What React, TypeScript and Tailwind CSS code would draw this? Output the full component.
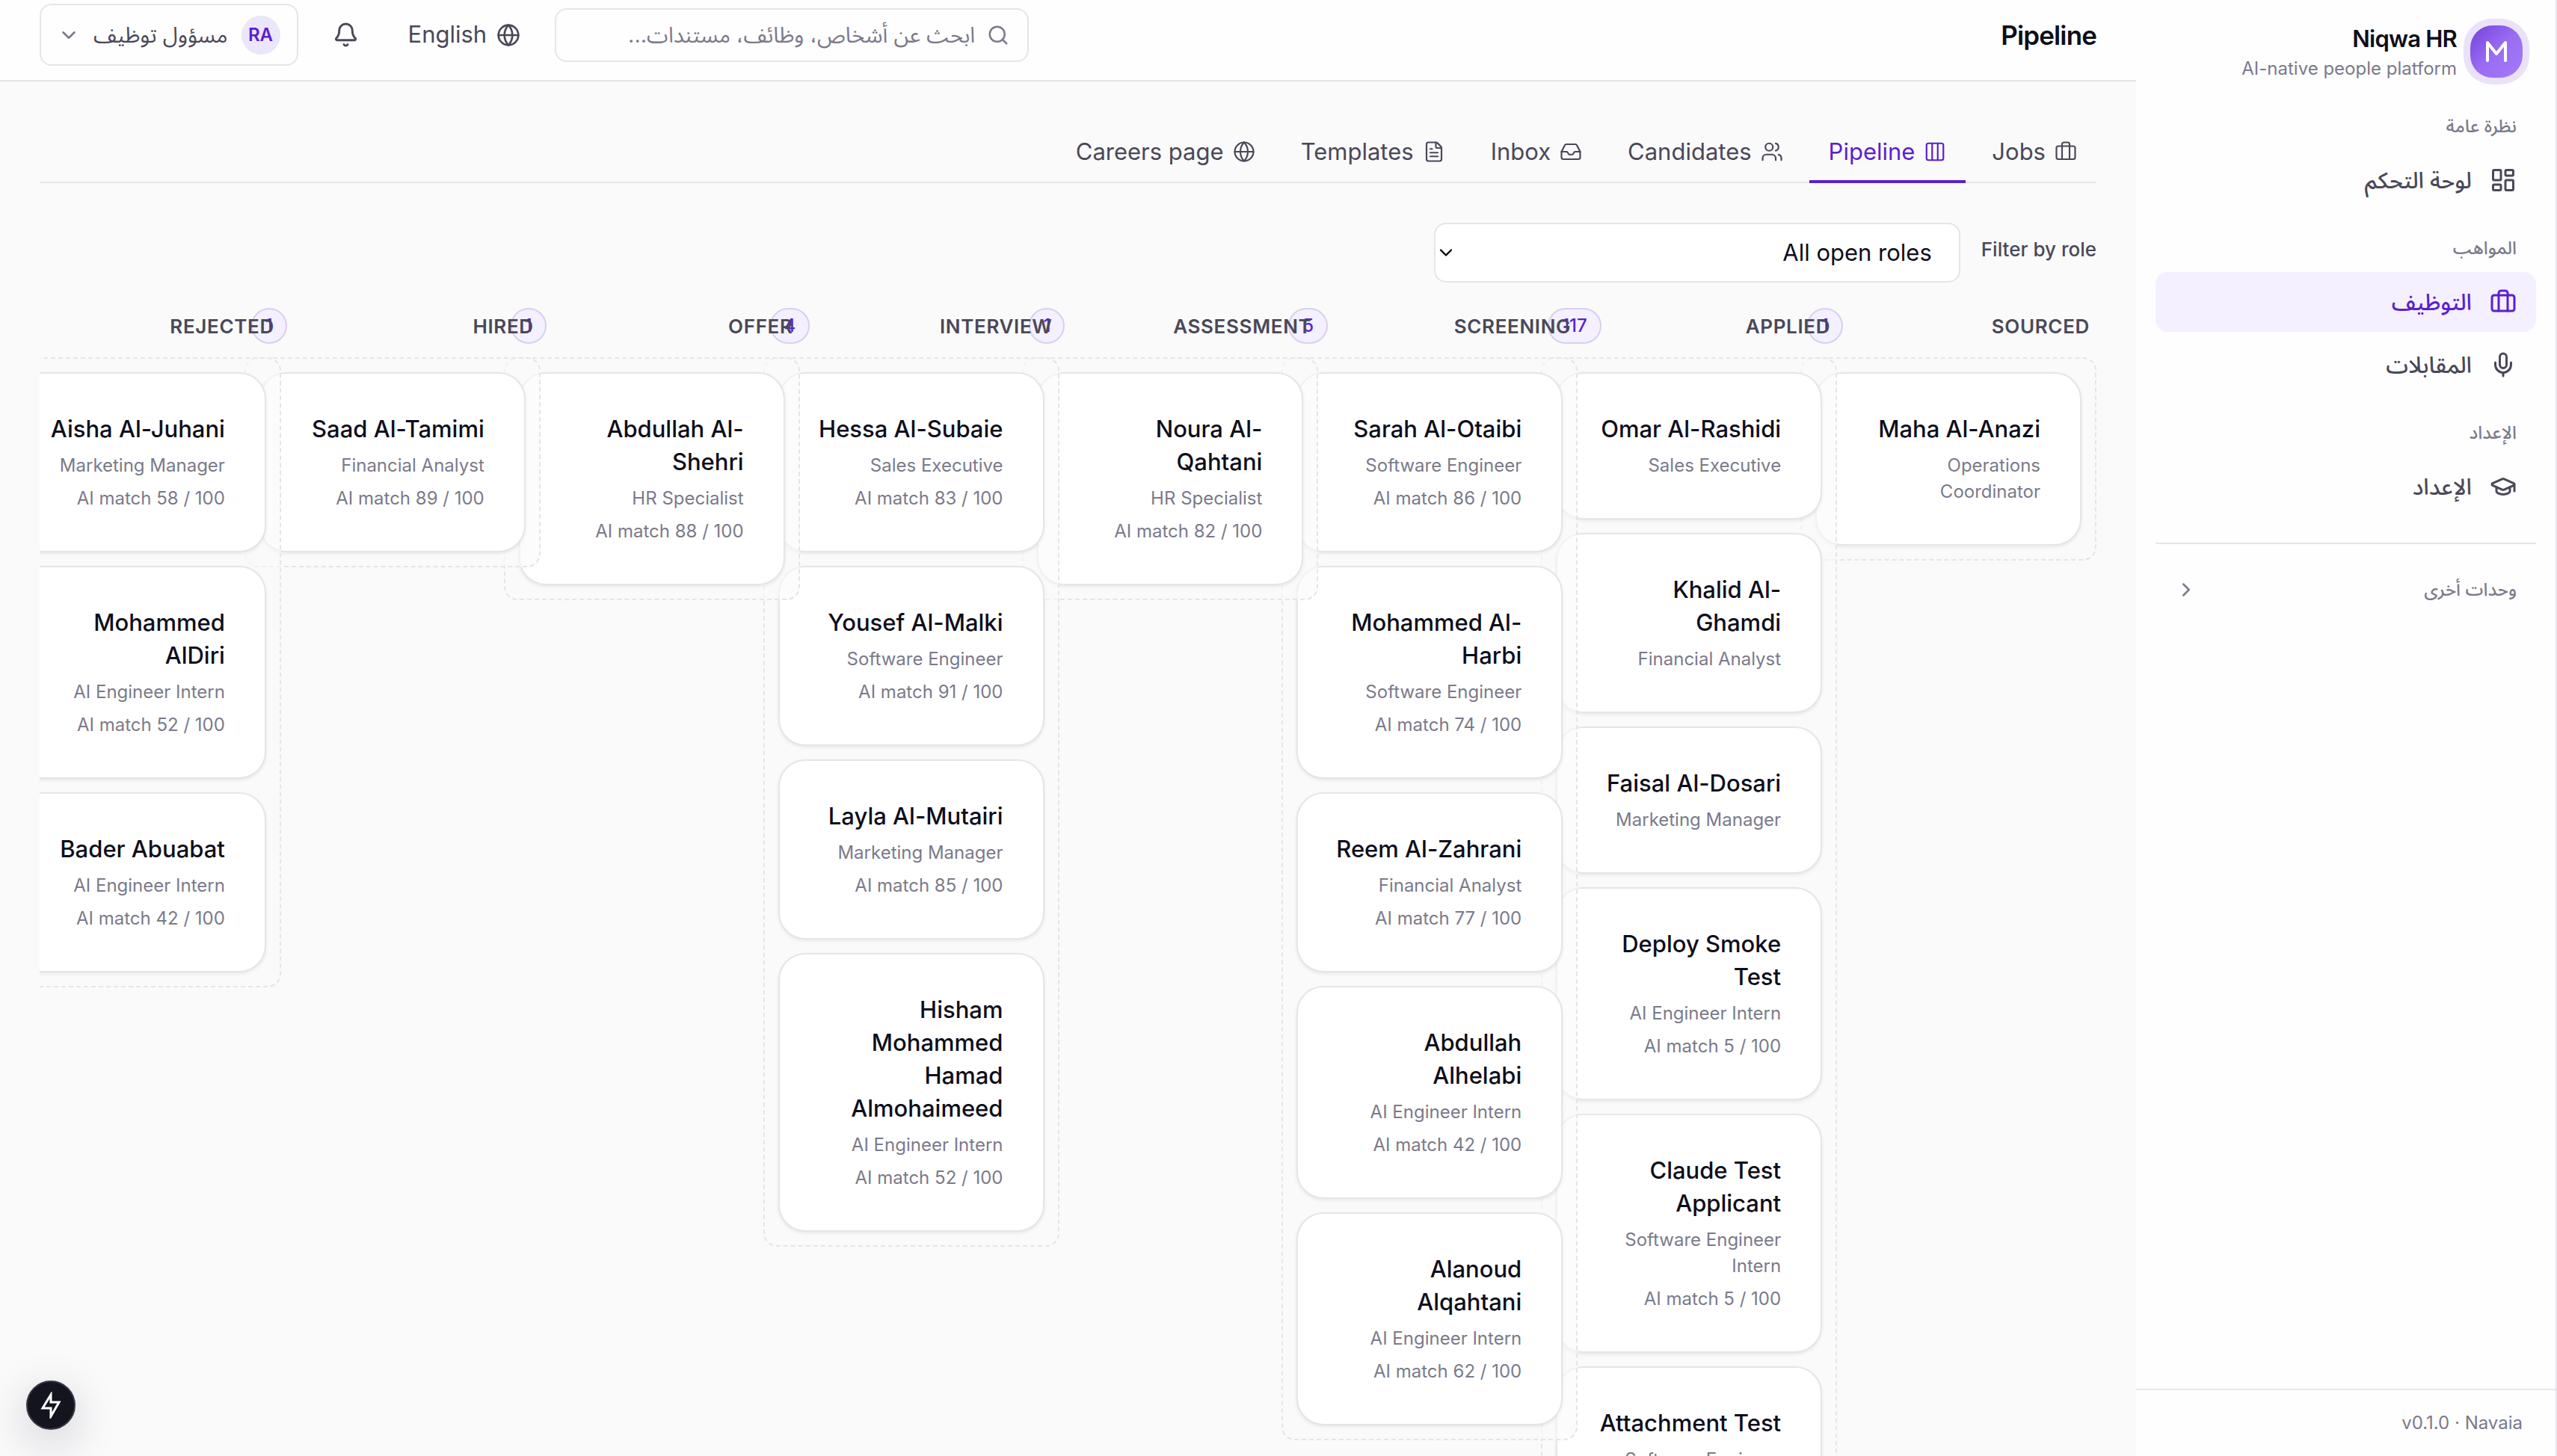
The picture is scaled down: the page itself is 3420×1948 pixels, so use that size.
import {
  Bell, Briefcase, ChevronDown, ChevronRight, Columns3, FileText, Globe, GraduationCap,
  Inbox, LayoutDashboard, Mic, Search, Users,
} from 'lucide-react'

type Candidate = { name: string; role: string; match?: number }
type Stage = { label: string; count: number; items: Candidate[] }

const stages: Stage[] = [
  {
    label: 'Sourced',
    count: 1,
    items: [{ name: 'Maha Al-Anazi', role: 'Operations Coordinator' }],
  },
  {
    label: 'Applied',
    count: 117,
    items: [
      { name: 'Omar Al-Rashidi', role: 'Sales Executive' },
      { name: 'Khalid Al-Ghamdi', role: 'Financial Analyst' },
      { name: 'Faisal Al-Dosari', role: 'Marketing Manager' },
      { name: 'Deploy Smoke Test', role: 'AI Engineer Intern', match: 5 },
      { name: 'Claude Test Applicant', role: 'Software Engineer Intern', match: 5 },
      { name: 'Attachment Test', role: 'Software Engineer Intern', match: 5 },
    ],
  },
  {
    label: 'Screening',
    count: 5,
    items: [
      { name: 'Sarah Al-Otaibi', role: 'Software Engineer', match: 86 },
      { name: 'Mohammed Al-Harbi', role: 'Software Engineer', match: 74 },
      { name: 'Reem Al-Zahrani', role: 'Financial Analyst', match: 77 },
      { name: 'Abdullah Alhelabi', role: 'AI Engineer Intern', match: 42 },
      { name: 'Alanoud Alqahtani', role: 'AI Engineer Intern', match: 62 },
    ],
  },
  {
    label: 'Assessment',
    count: 1,
    items: [{ name: 'Noura Al-Qahtani', role: 'HR Specialist', match: 82 }],
  },
  {
    label: 'Interview',
    count: 4,
    items: [
      { name: 'Hessa Al-Subaie', role: 'Sales Executive', match: 83 },
      { name: 'Yousef Al-Malki', role: 'Software Engineer', match: 91 },
      { name: 'Layla Al-Mutairi', role: 'Marketing Manager', match: 85 },
      { name: 'Hisham Mohammed Hamad Almohaimeed', role: 'AI Engineer Intern', match: 52 },
    ],
  },
  {
    label: 'Offer',
    count: 1,
    items: [{ name: 'Abdullah Al-Shehri', role: 'HR Specialist', match: 88 }],
  },
  {
    label: 'Hired',
    count: 1,
    items: [{ name: 'Saad Al-Tamimi', role: 'Financial Analyst', match: 89 }],
  },
  {
    label: 'Rejected',
    count: 3,
    items: [
      { name: 'Aisha Al-Juhani', role: 'Marketing Manager', match: 58 },
      { name: 'Mohammed AlDiri', role: 'AI Engineer Intern', match: 52 },
      { name: 'Bader Abuabat', role: 'AI Engineer Intern', match: 42 },
    ],
  },
]

const tabs = [
  { label: 'Jobs', icon: Briefcase },
  { label: 'Pipeline', icon: Columns3, active: true },
  { label: 'Candidates', icon: Users },
  { label: 'Inbox', icon: Inbox },
  { label: 'Templates', icon: FileText },
  { label: 'Careers page', icon: Globe },
]

const nav = [
  { title: 'نظرة عامة', items: [{ label: 'لوحة التحكم', icon: LayoutDashboard }] },
  {
    title: 'المواهب',
    items: [
      { label: 'التوظيف', icon: Briefcase, active: true },
      { label: 'المقابلات', icon: Mic },
    ],
  },
  { title: 'الإعداد', items: [{ label: 'الإعداد', icon: GraduationCap }] },
]

function Sidebar() {
  return (
    <aside className="flex w-[563px] shrink-0 flex-col border-r-2 border-[#e5e5ea] bg-[#fefefe]">
      <div className="flex items-center gap-[9px] px-[35px] pt-[25px] pb-[34px]">
        <span className="flex size-[88px] shrink-0 items-center justify-center rounded-[38px] bg-[#e9e2f9]">
          <span className="flex size-[70px] items-center justify-center rounded-[30px] bg-linear-to-br from-[#7440dc] via-[#9a6cf2] to-[#a57cf8]">
            <svg viewBox="0 0 28 28" className="size-7" fill="none" stroke="#fff" strokeWidth="4" strokeLinecap="round" strokeLinejoin="round">
              <path d="M2 26V2l12 15L26 2v24" />
            </svg>
          </span>
        </span>
        <div className="pt-[6px]">
          <div className="text-[31px] leading-[40px] font-semibold tracking-tight text-[#0e0e1a]">Niqwa HR</div>
          <div className="text-2xl leading-[40px] text-[#7b7a8a]">AI-native people platform</div>
        </div>
      </div>

      <nav className="flex flex-col px-[26px]">
        {nav.map((group) => (
          <div key={group.title} className="mb-[29px]">
            <h2 className="mb-[10px] px-[26px] text-2xl leading-[44px] font-medium text-[#7b7a8a]">{group.title}</h2>
            <ul className="flex flex-col gap-1">
              {group.items.map(({ label, icon: Icon, ...item }) => (
                <li key={label}>
                  <a
                    href="#"
                    className={`flex h-20 items-center gap-6 rounded-2xl px-[26px] text-[30px] font-medium ${
                      'active' in item ? 'bg-[#f4f0ff] text-[#5b1fd0]' : 'text-[#4a4858]'
                    }`}
                  >
                    <Icon size={36} strokeWidth={2} />
                    {label}
                  </a>
                </li>
              ))}
            </ul>
          </div>
        ))}
        <button className="mt-[6px] flex h-[124px] items-center justify-between border-t-2 border-[#e5e5ea] px-[26px] text-2xl font-medium text-[#7b7a8a]">
          وحدات أخرى
          <ChevronRight size={30} />
        </button>
      </nav>

      <div className="mt-auto border-t-2 border-[#e5e5ea] px-11 py-6 text-2xl leading-[40px] text-[#7b7a8a]" dir="ltr">
        <p className="text-right">v0.1.0 · Navaia</p>
      </div>
    </aside>
  )
}

function TopBar() {
  return (
    <header className="flex h-[109px] shrink-0 items-center justify-between border-b-2 border-[#e5e5ea] bg-[#fefefe] px-[53px] pb-[14px]">
      <h1 className="text-[35px] leading-[44px] font-semibold tracking-tight text-[#0e0e1a]">Pipeline</h1>
      <div className="flex items-center">
        <label className="me-[46px] flex h-[72px] w-[634px] items-center gap-4 rounded-2xl border-2 border-[#e5e5ea] px-6 text-[#7b7a8a]">
          <Search size={30} />
          <input
            type="search"
            aria-label="بحث"
            placeholder="ابحث عن أشخاص، وظائف، مستندات..."
            className="min-w-0 flex-1 text-[29px] outline-none placeholder:text-[#7b7a8a]"
          />
        </label>
        <button className="me-[66px] flex items-center gap-[13px] text-[31px] text-[#4a4858]">
          <Globe size={32} />
          English
        </button>
        <button aria-label="Notifications" className="me-[46px] text-[#4a4858]">
          <Bell size={35} />
        </button>
        <button className="flex h-[83px] items-center gap-[18px] rounded-2xl border-2 border-[#e5e5ea] px-[22px] text-[29px] text-[#4a4858]">
          <span className="flex size-[52px] items-center justify-center rounded-full bg-[#ece6fa] text-2xl font-semibold text-[#5b1fd0]">RA</span>
          مسؤول توظيف
          <ChevronDown size={30} className="text-[#7b7a8a]" />
        </button>
      </div>
    </header>
  )
}

function CandidateCard({ name, role, match }: Candidate) {
  return (
    <article className="rounded-[36px] border-2 border-[#e5e5ea] bg-white pt-[52px] pb-[53px] ps-[53px] pe-[46px] shadow-[0_2px_4px_rgba(20,20,40,0.08)]">
      <h3 className="text-[31px] leading-[44px] font-medium text-[#0e0e1a]">{name}</h3>
      <p className="mt-[9px] text-2xl leading-[35px] text-[#7b7a8a]">{role}</p>
      {match !== undefined && (
        <p className="mt-[9px] text-2xl leading-[35px] text-[#7b7a8a]">AI match {match} / 100</p>
      )}
    </article>
  )
}

function Column({ label, count, items }: Stage) {
  return (
    <section className="relative w-[396px]">
      <header className="flex h-12 items-center justify-between px-[9px]">
        <h2 className="text-[26px] font-semibold tracking-wide text-[#4a4858] uppercase">{label}</h2>
        <span className="rounded-full border-2 border-[#d8d0ec] bg-[#f4f0ff] px-[17px] text-2xl leading-[44px] font-medium text-[#5b1fd0]">
          {count}
        </span>
      </header>
      <div className="mt-[18px] flex flex-col gap-[18px] rounded-[18px] border-2 border-dashed border-[#e5e5e8] bg-[#fafafa]/60 p-[18px]">
        {items.map((c) => (
          <CandidateCard key={c.name} {...c} />
        ))}
      </div>
    </section>
  )
}

export default function App() {
  return (
    <div dir="rtl" className="flex h-screen overflow-hidden bg-[#fafafa] font-['Inter','Noto_Sans_Arabic','DejaVu_Sans',sans-serif]">
      <Sidebar />
      <div className="flex min-w-0 flex-1 flex-col">
        <TopBar />
        <main className="flex min-h-0 flex-1 flex-col px-[53px] pt-14">
          <nav className="flex gap-[9px] border-b-2 border-[#e5e5ea]">
            {tabs.map(({ label, icon: Icon, active }) => (
              <a
                key={label}
                href="#"
                className={`-mb-[2px] flex h-20 items-center gap-3 border-b-4 px-[26px] text-[31px] ${
                  active ? 'border-[#5b1fd0] text-[#5b1fd0]' : 'border-transparent text-[#4a4858]'
                }`}
              >
                <Icon size={30} strokeWidth={1.75} />
                {label}
              </a>
            ))}
          </nav>

          <div className="mt-[53px] flex items-center gap-7">
            <label htmlFor="role" className="pb-[10px] text-[26px] font-medium text-[#4a4858]">Filter by role</label>
            <div className="relative">
              <select id="role" className="block h-20 w-[704px] appearance-none rounded-2xl border-2 border-[#e5e5ea] bg-white px-9 text-[31px] text-[#0e0e1a]">
                <option>All open roles</option>
              </select>
              <ChevronDown size={28} className="pointer-events-none absolute top-[26px] left-[2px]" />
            </div>
          </div>

          <div className="mt-[34px] grid min-h-0 flex-1 grid-cols-8 items-start gap-6 overflow-hidden">
            {stages.map((stage) => (
              <Column key={stage.label} {...stage} />
            ))}
          </div>
        </main>
      </div>
      <button aria-label="Quick actions" className="fixed bottom-[35px] left-[35px] flex size-[66px] items-center justify-center rounded-full border-2 border-[#3a3a48] bg-[#14141f] shadow-[0_16px_60px_rgba(20,20,60,0.2)]">
        <svg viewBox="0 0 28 36" className="h-9 w-7 shrink-0" fill="none" stroke="#fff" strokeWidth="3">
          <path d="M14 4 3 22h11v11L25 14H14z" />
        </svg>
      </button>
    </div>
  )
}
